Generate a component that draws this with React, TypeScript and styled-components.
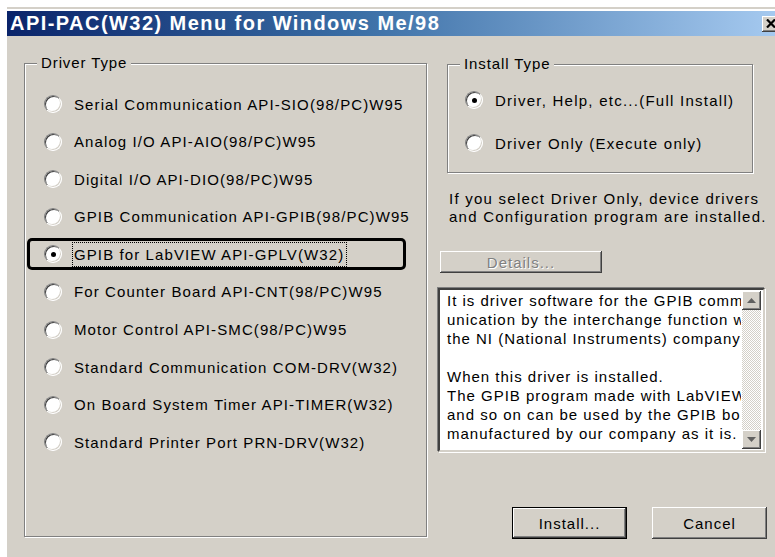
import React from "react";
import styled, { createGlobalStyle } from "styled-components";

const GlobalStyle = createGlobalStyle`
  html, body {
    margin: 0;
    padding: 0;
    background: #fff;
    overflow: hidden;
  }
  body {
    font-family: "Liberation Sans", Arial, sans-serif;
    color: #000;
  }
`;

const Page = styled.div`
  width: 775px;
  height: 557px;
  padding: 7px 0 0 7px;
  box-sizing: border-box;
  overflow: hidden;
`;

const Window = styled.div`
  width: 772px;
  border-top: 2px solid #d4d0c8;
`;

const TitleBar = styled.div`
  margin-top: 2px;
  height: 25px;
  display: flex;
  align-items: center;
  justify-content: space-between;
  padding-left: 3px;
  background: linear-gradient(to right, #0a246a 0%, #3a6ea5 45%, #a6caf0 100%);
`;

const Title = styled.span`
  color: #fff;
  font-weight: bold;
  font-size: 20px;
  letter-spacing: 1.45px;
  white-space: nowrap;
`;

const CloseButton = styled.div`
  width: 17px;
  height: 16px;
  display: flex;
  align-items: center;
  justify-content: center;
  background: #d4d0c8;
  box-shadow: inset -1px -1px #404040, inset 1px 1px #fff, inset -2px -2px #808080;
`;

const Body = styled.div`
  height: 540px;
  background: #d4d0c8;
  display: flex;
  padding: 27px 0 0 17px;
  box-sizing: border-box;
`;

const GroupBox = styled.div<{ $w: number; $h: number }>`
  position: relative;
  width: ${(p) => p.$w}px;
  height: ${(p) => p.$h}px;
  box-sizing: border-box;
  border: 1px solid #808080;
  box-shadow: inset 1px 1px #fff, 1px 1px #fff;
`;

const GroupLabel = styled.span`
  position: absolute;
  top: -10px;
  left: 12px;
  padding: 0 4px;
  background: #d4d0c8;
  font-size: 15px;
  line-height: 18px;
  letter-spacing: 0.9px;
  white-space: nowrap;
`;

const DriverList = styled.div`
  display: grid;
  grid-auto-rows: 32px;
  row-gap: 5.6px;
  padding: 24px 0 0 2px;
`;

const OptionRow = styled.div<{ $marked?: boolean }>`
  width: 379px;
  display: flex;
  align-items: center;
  gap: 13px;
  padding-left: 17px;
  box-sizing: border-box;
  border-radius: 5px;
  box-shadow: ${(p) => (p.$marked ? "inset 0 0 0 3px #000" : "none")};
`;

const InstallList = styled.div`
  display: grid;
  grid-auto-rows: 32px;
  row-gap: 11px;
  padding-top: 19px;
`;

const Circle = styled.span<{ $checked?: boolean }>`
  position: relative;
  flex: none;
  width: 18px;
  height: 18px;
  border-radius: 50%;
  box-sizing: border-box;
  background: #fff;
  border: 1px solid;
  border-color: #808080 #fff #fff #808080;
  box-shadow: inset 1px 1px #404040, inset -1px -1px #d4d0c8;

  &::after {
    content: "";
    display: ${(p) => (p.$checked ? "block" : "none")};
    position: absolute;
    left: 5.5px;
    top: 5.5px;
    width: 5px;
    height: 5px;
    border-radius: 50%;
    background: #000;
  }
`;

const OptionText = styled.span<{ $focused?: boolean }>`
  font-size: 15px;
  line-height: 21px;
  letter-spacing: 1.1px;
  white-space: nowrap;
  padding: 1px 2px 1px 1px;
  margin-left: -2px;
  outline: ${(p) => (p.$focused ? "1px dotted #000" : "none")};
`;

const RightColumn = styled.div`
  width: 329px;
  margin-left: 11px;
  display: flex;
  flex-direction: column;
`;

const InstallGroup = styled(GroupBox)`
  margin: 1px 0 0 9px;
`;

const InstallText = styled(OptionText)`
  letter-spacing: 1.25px;
`;

const Note = styled.p`
  margin: 17px 0 0 11px;
  font-size: 15px;
  line-height: 18px;
  letter-spacing: 1.25px;
  white-space: nowrap;
`;

const Button = styled.button<{ $default?: boolean; $w: number; $h: number }>`
  width: ${(p) => p.$w}px;
  height: ${(p) => p.$h}px;
  padding: 0;
  background: #d4d0c8;
  font-family: "Liberation Sans", Arial, sans-serif;
  font-size: 15px;
  letter-spacing: 1px;
  color: #000;
  border: ${(p) => (p.$default ? "1px solid #000" : "none")};
  box-shadow: inset -1px -1px #404040, inset 1px 1px #fff, inset -2px -2px #808080;

  &:disabled {
    color: #808080;
    text-shadow: 1px 1px #fff;
  }
`;

const DetailsButton = styled(Button)`
  margin: 25px 0 0 2px;
`;

const InfoBox = styled.div`
  margin-top: 15px;
  width: 327px;
  height: 164px;
  box-sizing: border-box;
  display: flex;
  background: #fff;
  border: 2px solid;
  border-color: #404040 #d4d0c8 #d4d0c8 #404040;
  box-shadow: -1px -1px #808080, 1px 1px #fff;
`;

const InfoText = styled.div`
  flex: 1;
  overflow: hidden;
  padding: 1px 0 0 7px;
  font-size: 15px;
  line-height: 19px;
  letter-spacing: 1px;
  white-space: pre;
`;

const ScrollBar = styled.div`
  width: 19px;
  margin: 1px 2px 1px 1px;
  display: flex;
  flex-direction: column;
  justify-content: space-between;
  background: repeating-conic-gradient(#d4d0c8 0 25%, #fff 0 50%) 0 0 / 2px 2px;
`;

const ScrollArrow = styled.div`
  height: 19px;
  display: flex;
  align-items: center;
  justify-content: center;
  background: #d4d0c8;
  box-shadow: inset -1px -1px #404040, inset 1px 1px #fff, inset -2px -2px #808080;
`;

const ButtonRow = styled.div`
  margin-top: 55px;
  display: flex;
  justify-content: flex-end;
  gap: 25px;
`;

const drivers = [
  "Serial Communication API-SIO(98/PC)W95",
  "Analog I/O API-AIO(98/PC)W95",
  "Digital I/O API-DIO(98/PC)W95",
  "GPIB Communication API-GPIB(98/PC)W95",
  "GPIB for LabVIEW API-GPLV(W32)",
  "For Counter Board API-CNT(98/PC)W95",
  "Motor Control API-SMC(98/PC)W95",
  "Standard Communication COM-DRV(W32)",
  "On Board System Timer API-TIMER(W32)",
  "Standard Printer Port PRN-DRV(W32)",
];

const selected = 4;

const description = [
  "It is driver software for the GPIB comm",
  "unication by the interchange function with",
  "the NI (National Instruments) company's",
  "",
  "When this driver is installed.",
  "The GPIB program made with LabVIEW",
  "and so on can be used by the GPIB board",
  "manufactured by our company as it is.",
].join("\n");

const Arrow: React.FC<{ up?: boolean }> = ({ up }) => (
  <svg width="9" height="5" viewBox="0 0 9 5">
    <polygon points={up ? "4.5,0 9,5 0,5" : "0,0 9,0 4.5,5"} fill="#606060" />
  </svg>
);

const App: React.FC = () => {
  return (
    <Page>
      <GlobalStyle />
      <Window>
        <TitleBar>
          <Title>API-PAC(W32) Menu for Windows Me/98</Title>
          <CloseButton>
            <svg width="10" height="9" viewBox="0 0 10 9">
              <path d="M1 0.5 L9 8.5 M9 0.5 L1 8.5" stroke="#000" strokeWidth="2.2" />
            </svg>
          </CloseButton>
        </TitleBar>
        <Body>
          <GroupBox $w={403} $h={474}>
            <GroupLabel>Driver Type</GroupLabel>
            <DriverList>
              {drivers.map((name, i) => (
                <OptionRow key={name} $marked={i === selected}>
                  <Circle $checked={i === selected} />
                  <OptionText $focused={i === selected}>{name}</OptionText>
                </OptionRow>
              ))}
            </DriverList>
          </GroupBox>
          <RightColumn>
            <InstallGroup $w={306} $h={109}>
              <GroupLabel>Install Type</GroupLabel>
              <InstallList>
                <OptionRow>
                  <Circle $checked />
                  <InstallText>Driver, Help, etc...(Full Install)</InstallText>
                </OptionRow>
                <OptionRow>
                  <Circle />
                  <InstallText>Driver Only (Execute only)</InstallText>
                </OptionRow>
              </InstallList>
            </InstallGroup>
            <Note>
              If you select Driver Only, device drivers
              <br />
              and Configuration program are installed.
            </Note>
            <DetailsButton $w={162} $h={22} disabled>
              Details...
            </DetailsButton>
            <InfoBox>
              <InfoText>{description}</InfoText>
              <ScrollBar>
                <ScrollArrow>
                  <Arrow up />
                </ScrollArrow>
                <ScrollArrow>
                  <Arrow />
                </ScrollArrow>
              </ScrollBar>
            </InfoBox>
            <ButtonRow>
              <Button $default $w={115} $h={32}>
                Install...
              </Button>
              <Button $w={115} $h={32}>
                Cancel
              </Button>
            </ButtonRow>
          </RightColumn>
        </Body>
      </Window>
    </Page>
  );
};

export default App;
